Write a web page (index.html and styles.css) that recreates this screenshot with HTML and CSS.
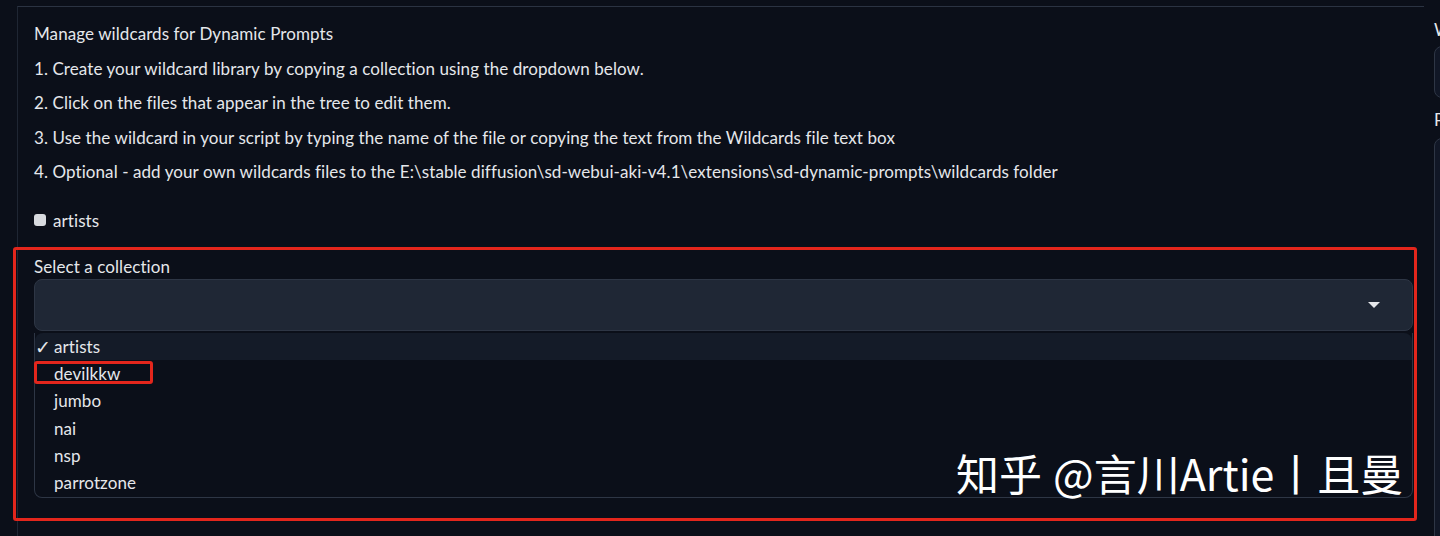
FILE: index.html
```html
<!DOCTYPE html>
<html lang="en">
<head>
<meta charset="utf-8">
<title>Wildcards Manager</title>
<link rel="stylesheet" href="styles.css">
</head>
<body>
<div class="page">
  <div class="panel">
    <div class="md">
      <p>Manage wildcards for Dynamic Prompts</p>
      <p>1. Create your wildcard library by copying a collection using the dropdown below.</p>
      <p>2. Click on the files that appear in the tree to edit them.</p>
      <p>3. Use the wildcard in your script by typing the name of the file or copying the text from the Wildcards file text box</p>
      <p>4. Optional - add your own wildcards files to the E:\stable diffusion\sd-webui-aki-v4.1\extensions\sd-dynamic-prompts\wildcards folder</p>
    </div>
    <label class="check-row"><span class="check-box"></span><span>artists</span></label>
    <div class="block">
      <div class="block-label">Select a collection</div>
      <div class="select">
        <svg class="caret" width="12" height="6" viewBox="0 0 12 6"><path d="M0 0 L12 0 L6 6 Z" fill="#e5e7eb"/></svg>
      </div>
      <ul class="options">
        <li class="option selected"><span class="tick">✓</span>artists</li>
        <li class="option"><span class="tick"></span>devilkkw<span class="mark-small"></span></li>
        <li class="option"><span class="tick"></span>jumbo</li>
        <li class="option"><span class="tick"></span>nai</li>
        <li class="option"><span class="tick"></span>nsp</li>
        <li class="option"><span class="tick"></span>parrotzone</li>
      </ul>
      <div class="mark-big"></div>
      <div class="watermark"><span class="wm-gap">知乎</span>@言川Artie丨且曼</div>
    </div>
  </div>
  <div class="side">
    <div class="side-label">W</div>
    <div class="side-box short"></div>
    <div class="side-label">P</div>
    <div class="side-box tall"></div>
  </div>
</div>
</body>
</html>
```
FILE: styles.css
```css
html, body {
  margin: 0;
  padding: 0;
  background: #0b0f19;
  height: 536px;
  overflow: hidden;
}
body {
  font-family: "Lato", "Noto Sans", sans-serif;
  color: #e5e7eb;
  font-size: 17px;
  letter-spacing: 0.08px;
}
.page {
  display: flex;
  padding-top: 6px;
  padding-left: 17px;
  height: 530px;
}
.panel {
  width: 1407px;
  border-top: 1px solid #2b3342;
  border-left: 1px solid #1f2633;
  padding: 15px 0 0 16px;
  box-sizing: border-box;
  flex: none;
}
.md p {
  margin: 0 0 10.5px 0;
  line-height: 24px;
}
.check-row {
  display: flex;
  align-items: center;
  gap: 7px;
  height: 24px;
  margin-top: 24px;
}
.check-box {
  width: 12px;
  height: 12px;
  border-radius: 3px;
  background: #d8dadf;
}
.block {
  position: relative;
  margin-top: 23px;
  width: 1379px;
}
.block-label {
  line-height: 24px;
}
.select {
  height: 50px;
  background: #1f2735;
  border: 1px solid #2e3645;
  border-radius: 8px;
  display: flex;
  align-items: center;
  justify-content: flex-end;
  padding-right: 32px;
}
.caret { display: block; }
.options {
  list-style: none;
  margin: 2px 0 0 0;
  padding: 0 0 1px 0;
  border: 1px solid #2e3645;
  border-top: none;
  border-radius: 0 0 8px 8px;
  background: #0b0f19;
}
.option {
  position: relative;
  height: 27.2px;
  line-height: 27px;
  display: flex;
  padding-left: 0;
}
.option.selected {
  background: #141b28;
  border-radius: 8px 8px 0 0;
}
.tick {
  width: 19px;
  flex: none;
  font-size: 19px;
}
.mark-small {
  position: absolute;
  left: -1px;
  top: 1px;
  width: 113px;
  height: 17px;
  border: 3px solid #e3261c;
  border-radius: 3px;
}
.mark-big {
  position: absolute;
  left: -21px;
  top: -8px;
  width: 1398px;
  height: 268px;
  border: 3px solid #e3261c;
  border-radius: 3px;
  pointer-events: none;
}
.watermark {
  position: absolute;
  left: 922px;
  top: 189px;
  font-family: "Noto Sans CJK SC", "Lato", sans-serif;
  font-size: 43px;
  line-height: 56px;
  letter-spacing: 0;
  color: #ffffff;
  white-space: nowrap;
}
.wm-gap {
  margin-right: 11px;
}
.side {
  flex: 1;
  padding-left: 10px;
  padding-top: 14px;
  box-sizing: border-box;
}
.side-label {
  line-height: 20px;
  font-size: 17px;
}
.side-box {
  background: #111726;
  border: 1px solid #2e3645;
  border-radius: 8px;
}
.side-box.short {
  height: 50px;
  margin-top: 6px;
  margin-bottom: 12px;
}
.side-box.tall {
  height: 420px;
  margin-top: 8px;
}
```
